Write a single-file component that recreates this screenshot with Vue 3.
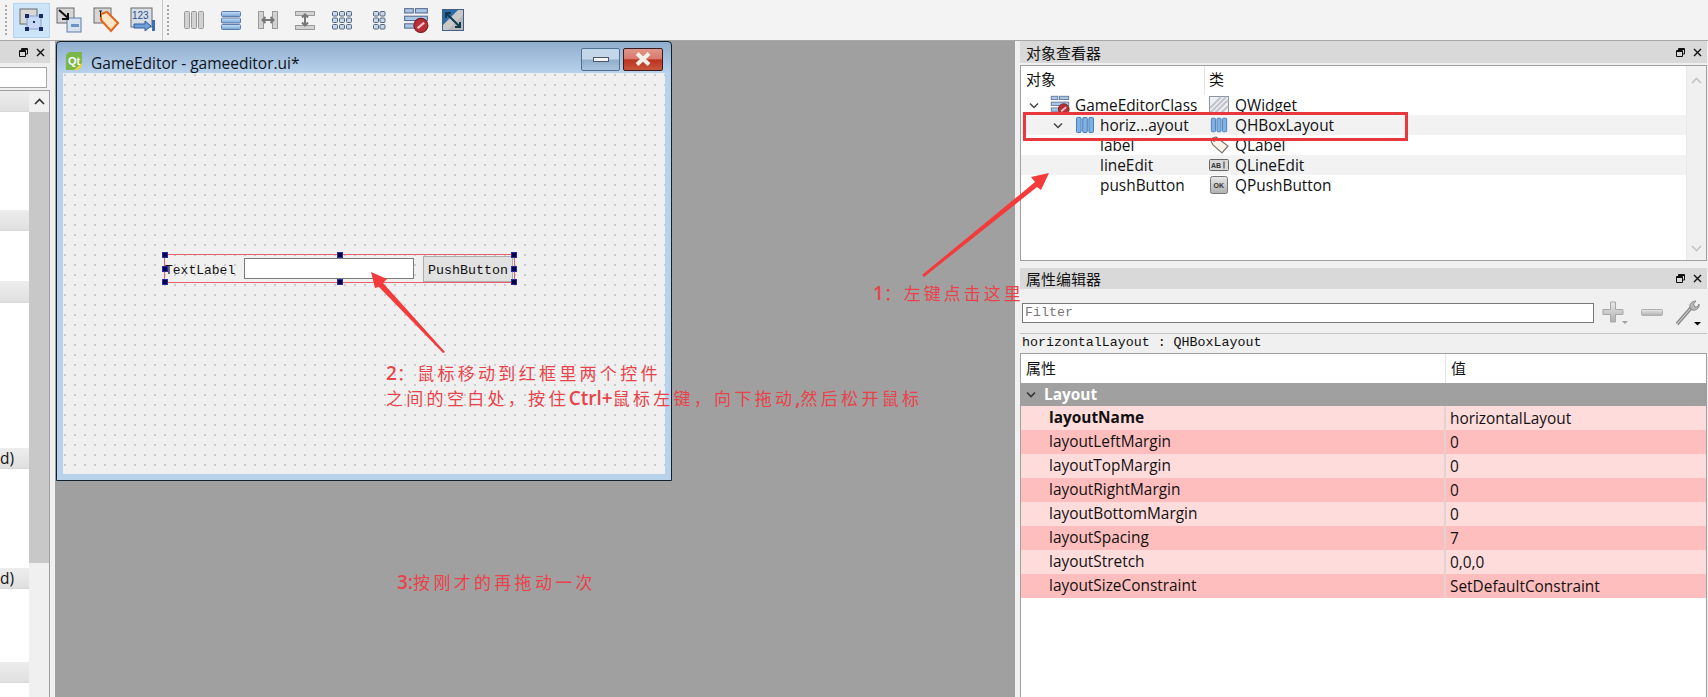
<script setup>
const leftRows = [
  { top: 0, h: 21, text: '' },
  { top: 98, h: 21, text: '' },
  { top: 50, h: 22, text: '' },
  { top: 145, h: 21, text: 'd)' },
  { top: 99, h: 21, text: 'd)' },
  { top: 73, h: 21, text: '' }
]

const handles = [
  [0, 0], [50, 0], [100, 0],
  [0, 50], [100, 50],
  [0, 100], [50, 100], [100, 100]
]

const treeRows = [
  { name: 'GameEditorClass', type: 'QWidget', icon: 'i-break', typeIcon: 'i-widget', chevron: 1, indent: 'lv0', band: false },
  { name: 'horiz...ayout', type: 'QHBoxLayout', icon: 'i-hbox', typeIcon: 'i-hbox', chevron: 2, indent: 'lv1', band: true },
  { name: 'label', type: 'QLabel', typeIcon: 'i-tag', indent: 'lv2', band: false },
  { name: 'lineEdit', type: 'QLineEdit', typeIcon: 'i-edit', indent: 'lv2', band: true },
  { name: 'pushButton', type: 'QPushButton', typeIcon: 'i-ok', indent: 'lv2', band: false }
]

const props = [
  { name: 'layoutName', value: 'horizontalLayout', bold: true },
  { name: 'layoutLeftMargin', value: '0' },
  { name: 'layoutTopMargin', value: '0' },
  { name: 'layoutRightMargin', value: '0' },
  { name: 'layoutBottomMargin', value: '0' },
  { name: 'layoutSpacing', value: '7' },
  { name: 'layoutStretch', value: '0,0,0' },
  { name: 'layoutSizeConstraint', value: 'SetDefaultConstraint' }
]
</script>

<template>
  <div class="page">
    <!-- shared icons -->
    <svg width="0" height="0" class="defs">
      <defs>
        <linearGradient id="blue" x1="0" y1="0" x2="0" y2="1">
          <stop offset="0" stop-color="#cfe3f7" />
          <stop offset="1" stop-color="#6fa3d8" />
        </linearGradient>
        <linearGradient id="greyb" x1="0" y1="0" x2="0" y2="1">
          <stop offset="0" stop-color="#e8e8e8" />
          <stop offset="1" stop-color="#b0b0b0" />
        </linearGradient>
        <symbol id="i-hbox" viewBox="0 0 20 20">
          <rect x="1.5" y="2.5" width="4.6" height="15" rx="1" fill="#7fb0e6" stroke="#4a7fb8" />
          <rect x="7.7" y="2.5" width="4.6" height="15" rx="1" fill="#7fb0e6" stroke="#4a7fb8" />
          <rect x="13.9" y="2.5" width="4.6" height="15" rx="1" fill="#7fb0e6" stroke="#4a7fb8" />
        </symbol>
        <symbol id="i-break" viewBox="0 0 24 24">
          <rect x="1.5" y="1.5" width="8" height="4" fill="#a8c6e8" stroke="#5a7090" />
          <rect x="11.5" y="1.5" width="11" height="4" fill="#a8c6e8" stroke="#5a7090" />
          <rect x="1.5" y="8.5" width="21" height="4" fill="#a8c6e8" stroke="#5a7090" />
          <rect x="1.5" y="15.5" width="10" height="4" fill="#a8c6e8" stroke="#5a7090" />
          <circle cx="16.5" cy="17" r="6.5" fill="#b83038" stroke="#7a1a20" />
          <path d="M13.5 19.5 L19.5 14.5" stroke="#f0c8c8" stroke-width="2" />
        </symbol>
        <symbol id="i-widget" viewBox="0 0 20 18">
          <rect x="0.5" y="0.5" width="19" height="17" fill="#eef1f6" stroke="#8a93a3" />
          <path d="M1 12 L12 1 M1 17 L17 1 M6 17 L19 4 M12 17 L19 10" stroke="#c0c4ca" stroke-width="2.2" />
        </symbol>
        <symbol id="i-tag" viewBox="0 0 20 18">
          <path d="M1 3 L7 1 L19 10 L13 17 L4 9 Z" fill="#fbf3ea" stroke="#807468" stroke-width="1.2" />
          <circle cx="5" cy="4.5" r="1.3" fill="#807468" />
        </symbol>
        <symbol id="i-edit" viewBox="0 0 20 14">
          <rect x="0.5" y="1.5" width="19" height="11" rx="1" fill="#d8d8d8" stroke="#666" />
          <text x="2" y="10" font-family="Liberation Sans, sans-serif" font-size="7" font-weight="700" fill="#333">AB</text>
          <path d="M15 3.5 V10.5" stroke="#333" />
        </symbol>
        <symbol id="i-ok" viewBox="0 0 18 18">
          <rect x="0.5" y="0.5" width="17" height="17" rx="2" fill="url(#greyb)" stroke="#777" />
          <text x="3.5" y="12" font-family="Liberation Sans, sans-serif" font-size="7" font-weight="700" fill="#333">OK</text>
        </symbol>
        <symbol id="i-float" viewBox="0 0 9 9">
          <path d="M2.5 2.5 V0.5 H8.5 V6 H6.5 M0.5 2.5 H6.5 V8.5 H0.5 Z M0.5 3.5 H6.5 M2.5 1.5 H8.5" fill="none" stroke="#111" />
        </symbol>
        <symbol id="i-close" viewBox="0 0 9 9">
          <path d="M1 1 L8 8 M8 1 L1 8" stroke="#111" stroke-width="1.4" />
        </symbol>
      </defs>
    </svg>

    <header class="toolbar">
      <div class="grip"></div>
      <div class="tool active">
        <svg width="26" height="26" viewBox="0 0 26 26">
          <rect x="1" y="2" width="17" height="15" fill="#d8d8d8" stroke="#6a6a6a" />
          <rect x="8" y="9" width="14" height="13" fill="#c6d8f6" stroke="#8aa0cc" />
          <g fill="#1b2a60">
            <rect x="6" y="7" width="4" height="4" /><rect x="20" y="7" width="4" height="4" />
            <rect x="6" y="20" width="4" height="4" /><rect x="20" y="20" width="4" height="4" />
            <rect x="14" y="14" width="2" height="2" />
          </g>
        </svg>
      </div>
      <div class="tool">
        <svg width="26" height="26" viewBox="0 0 26 26">
          <rect x="1" y="1" width="17" height="15" fill="#d6d6d6" stroke="#6a6a6a" />
          <rect x="11" y="11" width="14" height="14" fill="#d6e2f0" stroke="#5c7da8" />
          <rect x="15" y="17" width="8" height="3" fill="#6f93c4" />
          <path d="M3 3 L12 11 M12 6 V12 H6" stroke="#111" stroke-width="2" fill="none" />
        </svg>
      </div>
      <div class="tool">
        <svg width="26" height="26" viewBox="0 0 26 26">
          <rect x="1" y="1" width="17" height="15" fill="#d6d6d6" stroke="#6a6a6a" />
          <path d="M8 7 L14 5 L25 16 L18 24 L8 13 Z" fill="#fbe7c8" stroke="#e2671c" stroke-width="2" />
          <path d="M6 4 H9 M7.500 4 V10" stroke="#222" />
        </svg>
      </div>
      <div class="tool">
        <svg width="26" height="26" viewBox="0 0 26 26">
          <rect x="1" y="1" width="21" height="19" fill="#d8dee6" stroke="#6a6a6a" />
          <text x="2" y="12" font-family="Liberation Sans, sans-serif" font-size="10" fill="#2a4f8a">123</text>
          <path d="M4 17 H15 V14 L21 19 L15 24 V21 H4 Z" fill="#6f9fd8" stroke="#2e5c9e" />
          <rect x="22" y="13" width="3" height="11" fill="#3a6fb5" />
        </svg>
      </div>
      <div class="sep"></div>
      <div class="grip second"></div>
      <div class="tool">
        <svg width="24" height="24" viewBox="0 0 24 24">
          <g fill="#d2d2d2" stroke="#9a9a9a"><rect x="2.500" y="3.500" width="5" height="17" rx="1" /><rect x="9.500" y="3.500" width="5" height="17" rx="1" /><rect x="16.500" y="3.500" width="5" height="17" rx="1" /></g>
        </svg>
      </div>
      <div class="tool">
        <svg width="24" height="24" viewBox="0 0 24 24">
          <g fill="url(#blue)" stroke="#5c7da8"><rect x="2.500" y="3.500" width="19" height="5" rx="1" /><rect x="2.500" y="10" width="19" height="5" rx="1" /><rect x="2.500" y="16.500" width="19" height="5" rx="1" /></g>
        </svg>
      </div>
      <div class="tool">
        <svg width="24" height="24" viewBox="0 0 24 24">
          <g fill="#d2d2d2" stroke="#9a9a9a"><rect x="2.500" y="3.500" width="5" height="17" /><rect x="16.500" y="3.500" width="5" height="17" /></g>
          <path d="M7 12 H17 M9.500 9 L6.500 12 L9.500 15 M14.500 9 L17.500 12 L14.500 15" stroke="#777" stroke-width="2" fill="none" />
        </svg>
      </div>
      <div class="tool">
        <svg width="24" height="24" viewBox="0 0 24 24">
          <g fill="#d2d2d2" stroke="#9a9a9a"><rect x="2.500" y="3.500" width="19" height="4" /><rect x="2.500" y="17.500" width="19" height="4" /></g>
          <path d="M12 7 V17 M9 9.500 L12 6.500 L15 9.500 M9 14.500 L12 17.500 L15 14.500" stroke="#777" stroke-width="2" fill="none" />
        </svg>
      </div>
      <div class="tool">
        <svg width="24" height="24" viewBox="0 0 24 24">
          <g fill="#c8d8ec" stroke="#54657c">
            <rect x="2.500" y="3.500" width="5" height="4.500" rx="1" /><rect x="9.500" y="3.500" width="5" height="4.500" rx="1" /><rect x="16.500" y="3.500" width="5" height="4.500" rx="1" />
            <rect x="2.500" y="10" width="5" height="4.500" rx="1" /><rect x="9.500" y="10" width="5" height="4.500" rx="1" /><rect x="16.500" y="10" width="5" height="4.500" rx="1" />
            <rect x="2.500" y="16.500" width="5" height="4.500" rx="1" /><rect x="9.500" y="16.500" width="5" height="4.500" rx="1" /><rect x="16.500" y="16.500" width="5" height="4.500" rx="1" />
          </g>
        </svg>
      </div>
      <div class="tool">
        <svg width="24" height="24" viewBox="0 0 24 24">
          <g fill="#c8d8ec" stroke="#54657c">
            <rect x="6.500" y="3.500" width="5" height="4.500" rx="1" /><rect x="13" y="3.500" width="5" height="4.500" rx="1" />
            <rect x="6.500" y="10" width="5" height="4.500" rx="1" /><rect x="13" y="10" width="5" height="4.500" rx="1" />
            <rect x="6.500" y="16.500" width="5" height="4.500" rx="1" /><rect x="13" y="16.500" width="5" height="4.500" rx="1" />
          </g>
        </svg>
      </div>
      <div class="tool">
        <svg width="26" height="26"><use href="#i-break" /></svg>
      </div>
      <div class="tool">
        <svg width="24" height="24" viewBox="0 0 24 24">
          <rect x="1.500" y="1.500" width="21" height="21" fill="#c9c9c9" stroke="#3f5f84" />
          <path d="M2 2 H17 L2 17 Z" fill="#2e6aa6" />
          <path d="M22 22 H7 L22 7 Z" fill="#b9b9b9" />
          <path d="M5 5 L19 19 M5 10 V5 H10 M14 19 H19 V14" stroke="#12384f" stroke-width="2" fill="none" />
        </svg>
      </div>
    </header>

    <div class="workspace">
      <aside class="left-dock">
        <div class="dock-title left-title">
          <svg class="dock-ic" width="9" height="9"><use href="#i-float" /></svg>
          <svg class="dock-ic" width="9" height="9"><use href="#i-close" /></svg>
        </div>
        <div class="left-filter"></div>
        <div class="left-box">
          <div class="left-list">
            <div
              v-for="(row, i) in leftRows"
              :key="i"
              class="left-row"
              :style="{ marginTop: row.top + 'px', height: row.h + 'px' }"
            >{{ row.text }}</div>
          </div>
          <div class="left-scroll">
            <div class="left-arrow">
              <svg width="11" height="7" viewBox="0 0 11 7"><path d="M1 6 L5.500 1.500 L10 6" fill="none" stroke="#333" stroke-width="1.600" /></svg>
            </div>
            <div class="left-thumb"></div>
          </div>
        </div>
      </aside>

      <main class="canvas">
        <div class="window">
          <div class="win-title">
            <svg class="qt-logo" width="16" height="18" viewBox="0 0 16 18">
              <path d="M3 0 H16 V14 L12 18 H0 V3 Z" fill="#7ab648" />
              <path d="M16 11 V14 L12 18 H8 Z" fill="#e8d84a" />
              <text x="2" y="13" font-family="Liberation Sans, sans-serif" font-size="11" font-weight="700" fill="#fff">Qt</text>
            </svg>
            <span class="win-name">GameEditor - gameeditor.ui*</span>
            <div class="win-btn min"><span></span></div>
            <div class="win-btn close">
              <svg width="18" height="14" viewBox="0 0 18 14"><path d="M3 1.500 L15 12.500 M15 1.500 L3 12.500" stroke="#f4f0ec" stroke-width="4" /></svg>
            </div>
          </div>
          <div class="client">
            <div class="layout-box">
              <span class="w-label">TextLabel</span>
              <div class="w-edit"></div>
              <div class="w-button">PushButton</div>
              <i
                v-for="(h, i) in handles"
                :key="i"
                class="handle"
                :style="{ left: h[0] + '%', top: h[1] + '%' }"
              ></i>
            </div>
          </div>
        </div>
      </main>

      <aside class="right-dock">
        <div class="dock-title">
          <span class="dock-name">对象查看器</span>
          <svg class="dock-ic" width="9" height="9"><use href="#i-float" /></svg>
          <svg class="dock-ic" width="9" height="9"><use href="#i-close" /></svg>
        </div>
        <div class="tree-box">
          <div class="tree-main">
            <div class="tree-head">
              <span class="col-a">对象</span>
              <span class="col-b">类</span>
            </div>
            <div v-for="row in treeRows" :key="row.name" class="tree-row" :class="{ band: row.band }">
              <div class="col-a cell" :class="row.indent">
                <svg v-if="row.chevron" class="chev" width="10" height="7" viewBox="0 0 10 7"><path d="M1 1.500 L5 5.500 L9 1.500" fill="none" stroke="#444" stroke-width="1.500" /></svg>
                <svg v-if="row.icon" class="tree-ic" width="20" height="20"><use :href="'#' + row.icon" /></svg>
                <span>{{ row.name }}</span>
              </div>
              <div class="col-b cell">
                <svg class="type-ic" width="20" height="18"><use :href="'#' + row.typeIcon" /></svg>
                <span>{{ row.type }}</span>
              </div>
            </div>
          </div>
          <div class="tree-scroll">
            <svg width="11" height="7" viewBox="0 0 11 7"><path d="M1 6 L5.500 1.500 L10 6" fill="none" stroke="#c4c4c4" stroke-width="1.600" /></svg>
            <svg width="11" height="7" viewBox="0 0 11 7"><path d="M1 1 L5.500 5.500 L10 1" fill="none" stroke="#c4c4c4" stroke-width="1.600" /></svg>
          </div>
        </div>

        <div class="dock-title second-title">
          <span class="dock-name">属性编辑器</span>
          <svg class="dock-ic" width="9" height="9"><use href="#i-float" /></svg>
          <svg class="dock-ic" width="9" height="9"><use href="#i-close" /></svg>
        </div>
        <div class="filter-row">
          <div class="filter-input">Filter</div>
          <svg class="plus" width="28" height="24" viewBox="0 0 28 24">
            <path d="M8.500 1 H13.500 V8.500 H21 V13.500 H13.500 V21 H8.500 V13.500 H1 V8.500 H8.500 Z" fill="url(#greyb)" stroke="#a8a8a8" />
            <path d="M20 20 H26 L23 23 Z" fill="#a0a0a0" />
          </svg>
          <svg class="minus" width="22" height="8" viewBox="0 0 22 8">
            <rect x="0.500" y="0.500" width="21" height="6" rx="1" fill="url(#greyb)" stroke="#b0b0b0" />
          </svg>
          <svg class="wrench" width="28" height="28" viewBox="0 0 28 28">
            <path d="M3 25 L17 9" stroke="#8a8a8a" stroke-width="3.500" />
            <path d="M3 25 L17 9" stroke="#e0e0e0" stroke-width="1" />
            <path d="M16 9 C15 5 18 2 22 2 L19.500 5 L21 8 L24 7.500 L25 5 C26 9 22 12 18 11 Z" fill="#b8b8b8" stroke="#777" stroke-width="0.800" />
            <path d="M20 23 H27 L23.500 26.500 Z" fill="#000" />
          </svg>
        </div>
        <div class="obj-label">horizontalLayout : QHBoxLayout</div>
        <div class="prop-box">
          <div class="prop-head">
            <span class="p-a">属性</span>
            <span class="p-b">值</span>
          </div>
          <div class="prop-group">
            <svg width="10" height="7" viewBox="0 0 10 7"><path d="M1 1.500 L5 5.500 L9 1.500" fill="none" stroke="#333" stroke-width="1.600" /></svg>
            <span>Layout</span>
          </div>
          <div v-for="p in props" :key="p.name" class="prop-row">
            <div class="p-a" :class="{ strong: p.bold }">{{ p.name }}</div>
            <div class="p-b">{{ p.value }}</div>
          </div>
        </div>
      </aside>
    </div>

    <!-- red notes drawn on top of the screenshot -->
    <div class="red-box"></div>
    <svg class="arrows" width="1708" height="697" viewBox="0 0 1708 697">
      <path d="M922 275 L1035 182 L1031 177 L1049 173 L1041 190 L1037 187 L924 277 Z" fill="#f43a3a" />
      <path d="M371 272 L387 279 L383 283 L445 352 L443 353 L379 287 L375 288 Z" fill="#f43a3a" />
    </svg>
    <div class="note n1"><b>1</b>：左键点击这里</div>
    <div class="note n2"><b>2</b>：鼠标移动到红框里两个控件</div>
    <div class="note n2b">之间的空白处，按住<b>Ctrl+</b>鼠标左键，向下拖动<b>,</b>然后松开鼠标</div>
    <div class="note n3"><b>3:</b>按刚才的再拖动一次</div>
  </div>
</template>

<style>
html,
body {
  margin: 0;
  overflow: hidden;
  background: #f0f0f0;
}
</style>

<style scoped>
.page {
  position: relative;
  width: 1708px;
  height: 697px;
  overflow: hidden;
  background: #f0f0f0;
  color: #111;
  font-family: "Open Sans", "Noto Sans CJK SC", sans-serif;
  font-size: 15.400px;
  display: flex;
  flex-direction: column;
}

.defs {
  position: absolute;
}

/* toolbar */
.toolbar {
  height: 41px;
  flex: none;
  display: flex;
  align-items: center;
  padding-left: 5px;
  box-sizing: border-box;
  border-bottom: 1px solid #a8a8a8;
  background: #f3f3f3;
}

.grip {
  width: 3px;
  height: 30px;
  margin: 0 5px 0 0;
  background-image: radial-gradient(circle at 1px 1px, #a8a8a8 1px, transparent 1.2px);
  background-size: 3px 4px;
}

.grip.second {
  margin: 0 5px 0 4px;
}

.sep {
  width: 1px;
  height: 40px;
  background: #c8c8c8;
  margin-left: 1px;
}

.tool {
  width: 37px;
  height: 35px;
  display: flex;
  align-items: center;
  justify-content: center;
  box-sizing: border-box;
}

.tool.active {
  background: #cce4f7;
  border: 1px solid #b4d4ee;
}

/* workspace */
.workspace {
  flex: 1;
  display: flex;
  min-height: 0;
}

.left-dock {
  width: 55px;
  flex: none;
  display: flex;
  flex-direction: column;
}

.dock-title {
  height: 22px;
  flex: none;
  display: flex;
  align-items: center;
  justify-content: flex-end;
  background: #d9d9d9;
  padding-right: 5px;
  gap: 8px;
  box-sizing: border-box;
}

.left-title {
  width: 50px;
}

.dock-name {
  margin-right: auto;
  padding-left: 6px;
  font-size: 15px;
}

.left-filter {
  width: 47px;
  height: 21px;
  margin-top: 4px;
  box-sizing: border-box;
  background: #fff;
  border: 1px solid #a6a6a6;
  border-left: 0;
}

.left-box {
  width: 50px;
  margin-top: 2px;
  flex: 1;
  box-sizing: border-box;
  display: flex;
  background: #fff;
  border: 1px solid #a0a0a0;
  border-width: 1px 1px 0 0;
}

.left-list {
  width: 29px;
  flex: none;
}

.left-row {
  box-sizing: border-box;
  background: linear-gradient(#ededed, #e0e0e0);
  border-bottom: 1px solid #d8d8d8;
  line-height: 21px;
  white-space: nowrap;
}

.left-scroll {
  flex: 1;
  background: #f0f0f0;
}

.left-arrow {
  height: 21px;
  display: flex;
  align-items: center;
  justify-content: center;
}

.left-thumb {
  height: 451px;
  background: #c8c8c8;
}

.canvas {
  width: 960px;
  flex: none;
  position: relative;
  background: #a0a0a0;
}

.window {
  position: absolute;
  left: 1px;
  top: 0;
  width: 616px;
  height: 440px;
  box-sizing: border-box;
  display: flex;
  flex-direction: column;
  border: 1px solid #12202c;
  border-radius: 4px 4px 0 0;
  background: linear-gradient(#8fadcd 0, #b8d2ec 31px, #b8d2ec 100%);
}

.win-title {
  height: 31px;
  flex: none;
  display: flex;
  align-items: center;
  box-sizing: border-box;
  padding: 3px 8px 0 9px;
}

.qt-logo {
  margin-top: 4px;
}

.win-name {
  margin-left: 9px;
  margin-top: 7px;
  font-size: 15.500px;
  color: #0e1420;
}

.win-btn {
  height: 23px;
  box-sizing: border-box;
  display: flex;
  align-items: center;
  justify-content: center;
  border-radius: 2px;
}

.win-btn.min {
  margin-left: auto;
  width: 39px;
  border: 1px solid #4f6f90;
  background: linear-gradient(#c4d6ea 0, #c4d6ea 48%, #90aecb 52%, #a9c3dd 100%);
}

.win-btn.min span {
  width: 16px;
  height: 5px;
  background: #f4f4f4;
  border: 1px solid #48586a;
  box-sizing: border-box;
}

.win-btn.close {
  width: 40px;
  margin-left: 3px;
  border: 1px solid #3a1a1c;
  background: linear-gradient(#e0968a 0, #d87a6c 46%, #bb3420 52%, #c8553c 100%);
}

.client {
  flex: 1;
  position: relative;
  margin: 0 6px 6px;
  background-color: #f0f0f0;
  background-image: radial-gradient(circle at 2px 2px, #b4b4b4 0.6px, transparent 0.9px);
  background-size: 10px 10px;
}

.layout-box {
  position: absolute;
  left: 101px;
  top: 181px;
  width: 351px;
  height: 29px;
  box-sizing: border-box;
  display: flex;
  align-items: center;
  border: 1px solid #e8606a;
  font-family: "Liberation Mono", "DejaVu Sans Mono", monospace;
  font-size: 13.300px;
}

.w-label {
  width: 79px;
  flex: none;
  padding-top: 4px;
  box-sizing: border-box;
  font-size: 13px;
  color: #111;
}

.w-edit {
  width: 170px;
  height: 21px;
  flex: none;
  box-sizing: border-box;
  background: #fff;
  border: 1px solid #7a7a7a;
}

.w-button {
  width: 90px;
  height: 26px;
  margin-left: 9px;
  flex: none;
  box-sizing: border-box;
  background: #e1e1e1;
  border: 1px solid #adadad;
  text-align: center;
  line-height: 28px;
}

.handle {
  position: absolute;
  width: 6px;
  height: 6px;
  transform: translate(-50%, -50%);
  background: #00004c;
  outline: 1px solid #2a2aa0;
  outline-offset: -1px;
}

/* right docks */
.right-dock {
  margin-left: 5px;
  width: 687px;
  flex: none;
  display: flex;
  flex-direction: column;
}

.tree-box {
  height: 196px;
  margin-top: 2px;
  flex: none;
  box-sizing: border-box;
  display: flex;
  background: #fff;
  border: 1px solid #a0a0a0;
}

.tree-main {
  flex: 1;
  min-width: 0;
}

.tree-head {
  height: 29px;
  display: flex;
  align-items: center;
  font-size: 15px;
  box-sizing: border-box;
}

.col-a {
  width: 184px;
  flex: none;
  box-sizing: border-box;
  padding-left: 5px;
}

.tree-head .col-a {
  height: 100%;
  line-height: 27px;
  border-right: 1px solid #e4e4e4;
}

.tree-head .col-b {
  line-height: 27px;
  height: 100%;
}

.col-b {
  padding-left: 4px;
}

.tree-row {
  height: 20px;
  display: flex;
  align-items: center;
  white-space: nowrap;
}

.tree-row.band {
  background: #f2f2f2;
}

.cell {
  display: flex;
  align-items: center;
  position: relative;
}

.lv0 { padding-left: 54px; }
.lv1 { padding-left: 79px; }
.lv2 { padding-left: 79px; }

.chev {
  position: absolute;
}

.lv0 .chev { left: 8px; }
.lv1 .chev { left: 32px; }

.tree-ic {
  position: absolute;
  left: 29px;
}

.lv1 .tree-ic {
  left: 54px;
}

.type-ic {
  margin-right: 6px;
}

.tree-scroll {
  width: 20px;
  flex: none;
  display: flex;
  flex-direction: column;
  align-items: center;
  justify-content: space-between;
  padding: 11px 0 8px;
  box-sizing: border-box;
  background: #f0f0f0;
  border-left: 1px solid #e8e8e8;
}

.second-title {
  margin-top: 7px;
  height: 21px;
}

.filter-row {
  height: 45px;
  flex: none;
  display: flex;
  align-items: center;
  box-sizing: border-box;
  padding: 3px 0 0 2px;
  border-bottom: 1px solid #c4c4c4;
}

.filter-input {
  width: 572px;
  height: 20px;
  flex: none;
  box-sizing: border-box;
  background: #fff;
  border: 1px solid #7a7a7a;
  padding-left: 2px;
  font-family: "Liberation Mono", monospace;
  font-size: 13.300px;
  line-height: 18px;
  color: #777;
}

.plus {
  margin-left: 8px;
}

.minus {
  margin-left: 11px;
}

.wrench {
  margin-left: 11px;
}

.obj-label {
  height: 19px;
  flex: none;
  padding-left: 2px;
  font-family: "Liberation Mono", monospace;
  font-size: 13.300px;
  line-height: 18px;
  color: #111;
}

.prop-box {
  flex: 1;
  box-sizing: border-box;
  background: #fff;
  border: 1px solid #a0a0a0;
  border-bottom: 0;
}

.prop-head {
  height: 29px;
  display: flex;
  align-items: center;
  font-size: 15px;
}

.p-a {
  width: 425px;
  flex: none;
  box-sizing: border-box;
}

.prop-head .p-a {
  padding-left: 5px;
  height: 100%;
  line-height: 28px;
  border-right: 1px solid #e4e4e4;
}

.prop-head .p-b {
  padding-left: 5px;
  line-height: 28px;
  height: 100%;
}

.prop-group {
  height: 23px;
  display: flex;
  align-items: center;
  background: #a0a0a0;
  color: #fff;
  font-weight: 700;
  padding-left: 5px;
  gap: 8px;
}

.prop-row {
  height: 24px;
  display: flex;
  align-items: center;
  background: #ffdcdc;
  white-space: nowrap;
}

.prop-row:nth-of-type(even) {
  background: #ffbebe;
}

.prop-row .p-a {
  padding-left: 28px;
  height: 100%;
  line-height: 24px;
  border-right: 2px solid #e8d0d0;
}

.prop-row .p-b {
  padding-left: 4px;
}

.strong {
  font-weight: 700;
}

/* annotation layer */
.red-box {
  position: absolute;
  left: 1023px;
  top: 112px;
  width: 385px;
  height: 29px;
  box-sizing: border-box;
  border: 3px solid #e8383d;
}

.arrows {
  position: absolute;
  left: 0;
  top: 0;
  pointer-events: none;
}

.note {
  position: absolute;
  color: #e8434a;
  font-family: "Noto Sans CJK SC", sans-serif;
  font-size: 17px;
  letter-spacing: 3.300px;
  line-height: 22px;
  white-space: nowrap;
}

.note b {
  font-family: "Open Sans", sans-serif;
  font-weight: 600;
  letter-spacing: 0;
  font-size: 19px;
}

.n1 { left: 873px; top: 282px; letter-spacing: 3px; }
.n2 { left: 386px; top: 362px; }
.n2b { left: 386px; top: 387px; }
.n3 { left: 397px; top: 571px; }
</style>
